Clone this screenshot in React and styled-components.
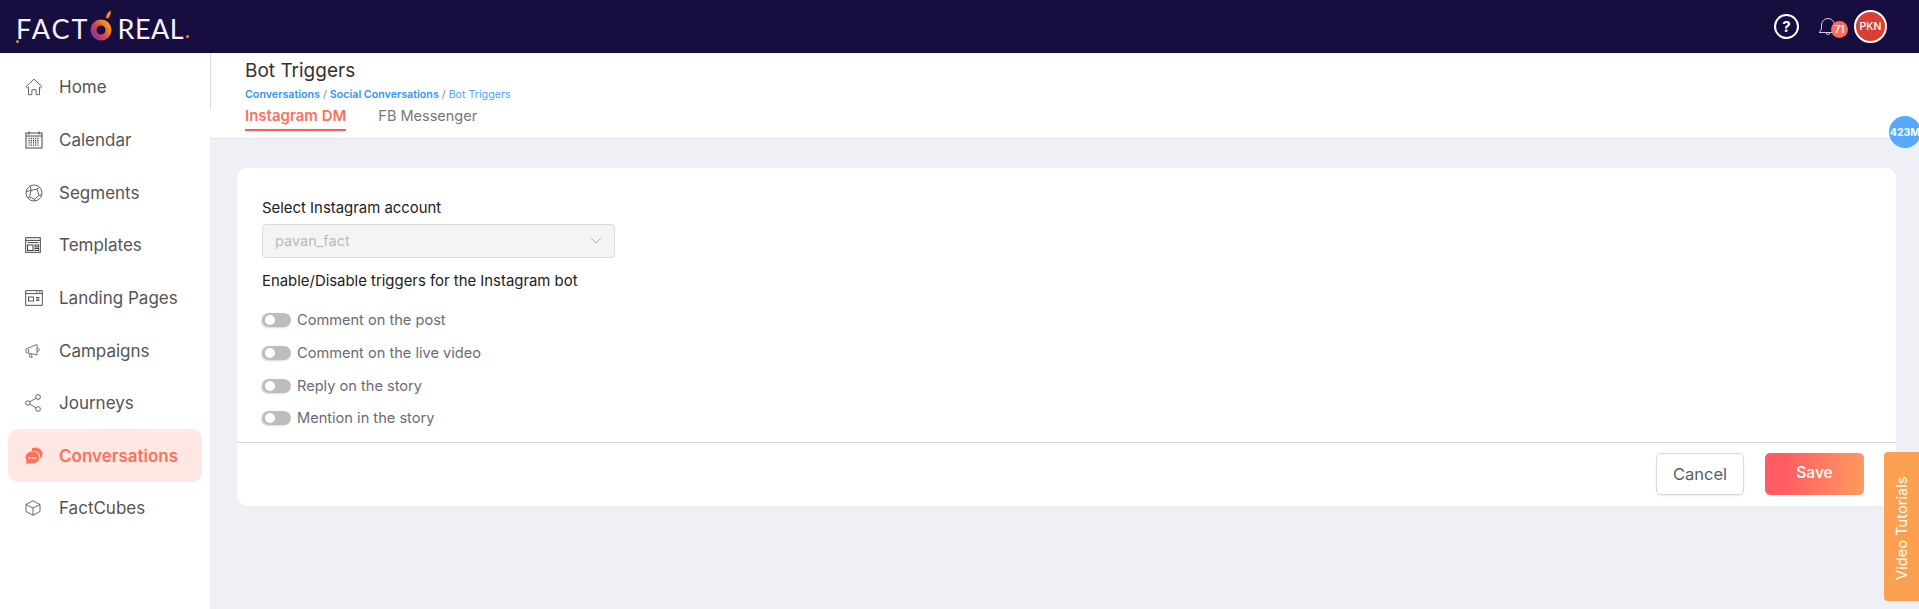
import React from "react";
import styled, { createGlobalStyle } from "styled-components";

const GlobalStyle = createGlobalStyle`
  html, body {
    margin: 0;
    padding: 0;
    height: 100%;
    overflow: hidden;
    background: #eff0f6;
    font-family: Inter, "Liberation Sans", sans-serif;
  }
  * { box-sizing: border-box; }
`;

const HomeIcon = () => (
  <svg width="18" height="18" viewBox="0 0 18 18" fill="none" stroke="#555" strokeWidth="0.9">
    <path d="M1 8.600 9 1.200l8 7.400-1.600 1.300-.9-.8v7.600h-3.400v-5H6.900v5H3.500V9.100l-.9.800z" strokeLinejoin="round" />
  </svg>
);
const CalendarIcon = () => (
  <svg width="18" height="18" viewBox="0 0 18 18" fill="none" stroke="#444" strokeWidth="1">
    <rect x="1" y="2" width="16" height="15" />
    <path d="M4 .5v3M14 .5v3M1 5h16" />
    <path d="M3.500 7.500h11M3.500 9.700h11M3.500 11.900h11M3.500 14.100h11" strokeDasharray="1.200 1" strokeWidth="1.400" />
  </svg>
);
const SegmentsIcon = () => (
  <svg width="18" height="18" viewBox="0 0 18 18" fill="none" stroke="#555" strokeWidth="0.9">
    <circle cx="9" cy="9" r="8" />
    <path d="M5.500 2 6 6.500l-4.800 1M6 6.500l6-1.500 2.500-1.500M12 5l2 6.500 2.800-1M14 11.500l-4.500 3.800.5 1.600M9.500 15.300 4.500 13l-1.500 1M4.500 13 6 6.500" />
  </svg>
);
const TemplatesIcon = () => (
  <svg width="16" height="16" viewBox="0 0 16 16" fill="none" stroke="#444" strokeWidth="1">
    <rect x="0.700" y="0.700" width="14.600" height="14.600" />
    <path d="M.7 3.400h14.600M2.500 5.600h11" />
    <rect x="2.500" y="8" width="5.500" height="5.500" />
    <rect x="10" y="8" width="3.500" height="2" />
    <rect x="10" y="11.500" width="3.500" height="2" />
  </svg>
);
const LandingIcon = () => (
  <svg width="18" height="16" viewBox="0 0 18 16" fill="none" stroke="#444" strokeWidth="0.9">
    <rect x="0.700" y="0.700" width="16.600" height="14.600" />
    <path d="M.7 3.600h16.600" />
    <path d="M11 2.100h1.500M14 2.100h1.500" />
    <rect x="3.500" y="7" width="5" height="4" />
    <path d="M11 7.500h3.500M11 9h3.500M11 10.500h3.500" />
  </svg>
);
const CampaignsIcon = () => (
  <svg width="16" height="16" viewBox="0 0 16 16" fill="none" stroke="#666" strokeWidth="0.9">
    <path d="M1 6 12 1.500v10.500L1 9.500z" strokeLinejoin="round" />
    <path d="M4 10.200l.8 4h2.400l-.8-3.200M12 5c1.500.2 2.500.8 2.500 1.700s-1 1.500-2.500 1.700" />
    <path d="M3.500 6v3" />
  </svg>
);
const JourneysIcon = () => (
  <svg width="16" height="18" viewBox="0 0 16 18" fill="none" stroke="#555" strokeWidth="0.9">
    <circle cx="2.800" cy="9" r="2.200" />
    <circle cx="13" cy="3" r="2.400" />
    <circle cx="13" cy="15" r="2.400" />
    <path d="M4.800 7.900 10.900 4.200M4.800 10.100l6.100 3.700" />
  </svg>
);
const ConversationsIcon = () => (
  <svg width="18" height="18" viewBox="0 0 18 18">
    <path d="M7 1.200c3.500-1.500 8-.2 9.800 3 1 2 .8 4-.2 5.800l.6 1.500-1.800-.5C15.500 6.500 11.500 3 7 4.300z" fill="#ff7059" />
    <path d="M7.500 4.500c3.800 0 6.700 2.600 6.700 6 0 3.500-3 6-6.700 6H.4l1.600-2C.9 13.300.5 12 .5 10.500c0-3.400 3.200-6 7-6z" fill="#ff7059" />
    <circle cx="4.500" cy="11" r="0.900" fill="#fff" />
    <circle cx="7.300" cy="11" r="0.900" fill="#fff" />
    <circle cx="10.100" cy="11" r="0.900" fill="#fff" />
  </svg>
);
const CubeIcon = () => (
  <svg width="16" height="16" viewBox="0 0 16 16" fill="none" stroke="#555" strokeWidth="0.9" strokeLinejoin="round">
    <path d="M8 .8 15 4.500v7L8 15.200 1 11.500v-7z" />
    <path d="M1 4.500 8 8l7-3.500M8 8v7.200" />
  </svg>
);

const navItems = [
  { name: "Home", icon: <HomeIcon /> },
  { name: "Calendar", icon: <CalendarIcon /> },
  { name: "Segments", icon: <SegmentsIcon /> },
  { name: "Templates", icon: <TemplatesIcon /> },
  { name: "Landing Pages", icon: <LandingIcon /> },
  { name: "Campaigns", icon: <CampaignsIcon /> },
  { name: "Journeys", icon: <JourneysIcon /> },
  { name: "Conversations", icon: <ConversationsIcon />, active: true },
  { name: "FactCubes", icon: <CubeIcon /> },
];

const triggers = [
  "Comment on the post",
  "Comment on the live video",
  "Reply on the story",
  "Mention in the story",
];

export default function App() {
  return (
    <Page>
      <GlobalStyle />
      <TopBar>
        <Logo>
          <LogoWord>FACT</LogoWord>
          <svg width="24" height="34" viewBox="0 0 24 34">
            <defs>
              <linearGradient id="ring" x1="0" y1="1" x2="1" y2="0.300">
                <stop offset="0" stopColor="#8a2f9e" />
                <stop offset="0.55" stopColor="#dd4a4a" />
                <stop offset="1" stopColor="#f59023" />
              </linearGradient>
            </defs>
            <circle cx="12" cy="20" r="7.500" fill="none" stroke="url(#ring)" strokeWidth="6" />
            <path d="M17 8c0-3 1.500-6 4.500-7.500.8 2.500 0 5.500-2.500 8z" fill="#f08a24" />
          </svg>
          <LogoWord $tight>REAL</LogoWord>
          <LogoDot />
          <FootDot />
          <TopDot />
        </Logo>
        <TopActions>
          <HelpButton>?</HelpButton>
          <Bell>
            <svg width="20" height="20" viewBox="0 0 20 20" fill="none" stroke="#cfcfdc" strokeWidth="1">
              <path d="M1 15.500c2-1 2.500-3 2.500-5.500V8a6.500 6.500 0 0 1 13 0v2c0 2.500.5 4.500 2.500 5.500z" strokeLinejoin="round" />
              <path d="M8 15.500a2 2 0 0 0 4 0" />
            </svg>
            <BellCount>71</BellCount>
          </Bell>
          <Avatar>PKN</Avatar>
        </TopActions>
      </TopBar>

      <Body>
        <Sidebar>
          {navItems.map(({ name, icon, active }) => (
            <NavItem key={name} $active={active}>
              <NavIcon>{icon}</NavIcon>
              {name}
            </NavItem>
          ))}
        </Sidebar>

        <Main>
          <SubHeader>
            <PageTitle>Bot Triggers</PageTitle>
            <Crumbs>
              <b>Conversations</b> <i>/</i> <b>Social Conversations</b> <i>/</i> Bot Triggers
            </Crumbs>
            <Tabs>
              <Tab $active>Instagram DM</Tab>
              <Tab>FB Messenger</Tab>
            </Tabs>
          </SubHeader>

          <Content>
            <Card>
              <CardBody>
                <FieldLabel>Select Instagram account</FieldLabel>
                <SelectBox>
                  pavan_fact
                  <svg width="12" height="7" viewBox="0 0 12 7" fill="none" stroke="#b5b5b5" strokeWidth="1">
                    <path d="M1 .8 6 6l5-5.200" />
                  </svg>
                </SelectBox>
                <TriggerHeading>Enable/Disable triggers for the Instagram bot</TriggerHeading>
                <TriggerList>
                  {triggers.map((t) => (
                    <TriggerRow key={t}>
                      <Toggle />
                      {t}
                    </TriggerRow>
                  ))}
                </TriggerList>
              </CardBody>
              <CardFooter>
                <CancelButton>Cancel</CancelButton>
                <SaveButton>Save</SaveButton>
              </CardFooter>
            </Card>
          </Content>
        </Main>
      </Body>

      <StorageBadge>423M</StorageBadge>
      <VideoTab>Video Tutorials</VideoTab>
    </Page>
  );
}

const Page = styled.div`
  position: relative;
  height: 609px;
  width: 100%;
  overflow: hidden;
  display: flex;
  flex-direction: column;
`;

const TopBar = styled.header`
  height: 53px;
  flex: none;
  background: #170d3e;
  display: flex;
  align-items: center;
  justify-content: space-between;
  padding: 0 32px 0 16px;
`;

const Logo = styled.div`
  position: relative;
  display: flex;
  align-items: center;
  color: #fff;
`;

const LogoWord = styled.span`
  font-family: Lato, Inter, sans-serif;
  font-size: 27px;
  line-height: 34px;
  font-weight: 400;
  letter-spacing: ${(p) => (p.$tight ? "0.500px" : "2px")};
  color: #f4f2f8;
  margin-top: 4px;
  margin-left: ${(p) => (p.$tight ? "4px" : "0")};
`;

const LogoDot = styled.i`
  width: 3px;
  height: 3px;
  margin: 20px 0 0 2px;
  background: #f08a24;
  border-radius: 50%;
`;

const FootDot = styled.i`
  position: absolute;
  left: 0;
  top: 32px;
  width: 3px;
  height: 3px;
  background: #f08a24;
  border-radius: 50%;
`;

const TopDot = styled.i`
  position: absolute;
  left: 121px;
  top: 9px;
  width: 2px;
  height: 2px;
  background: #b9489c;
  border-radius: 50%;
`;

const TopActions = styled.div`
  display: flex;
  align-items: center;
`;

const HelpButton = styled.div`
  width: 25px;
  height: 25px;
  border: 2px solid #fff;
  border-radius: 50%;
  color: #fff;
  font-size: 15px;
  font-weight: 700;
  display: flex;
  align-items: center;
  justify-content: center;
  margin-right: 19px;
`;

const Bell = styled.div`
  position: relative;
  width: 20px;
  height: 20px;
  margin-right: 16px;
`;

const BellCount = styled.span`
  position: absolute;
  top: 4px;
  left: 13px;
  width: 17px;
  height: 17px;
  border-radius: 50%;
  background: #ff6b55;
  color: #fff;
  font-size: 10px;
  font-weight: 600;
  display: flex;
  align-items: center;
  justify-content: center;
`;

const Avatar = styled.div`
  width: 33px;
  height: 33px;
  border-radius: 50%;
  border: 2px solid #fff;
  background: #d93f33;
  color: #fff;
  font-size: 10.500px;
  font-weight: 500;
  display: flex;
  align-items: center;
  justify-content: center;
`;

const Body = styled.div`
  flex: 1;
  display: flex;
  min-height: 0;
`;

const Sidebar = styled.nav`
  width: 210px;
  flex: none;
  background: #fff;
  padding: 8px 8px 0;
  display: flex;
  flex-direction: column;
`;

const NavItem = styled.div`
  height: 52.650px;
  flex: none;
  display: flex;
  align-items: center;
  padding-left: 17px;
  border-radius: 10px;
  font-size: 17px;
  font-weight: ${(p) => (p.$active ? 600 : 400)};
  color: ${(p) => (p.$active ? "#ff7059" : "#555")};
  background: ${(p) => (p.$active ? "#ffe8e3" : "transparent")};
`;

const NavIcon = styled.span`
  width: 34px;
  flex: none;
  display: flex;
  align-items: center;
  svg { display: block; }
`;

const Main = styled.main`
  flex: 1;
  min-width: 0;
  display: flex;
  flex-direction: column;
`;

const SubHeader = styled.div`
  position: relative;
  height: 86px;
  flex: none;
  background: #fff;
  border-bottom: 1px solid #e3e3e8;
  padding: 6px 0 0 35px;
  &::before {
    content: "";
    position: absolute;
    top: 0;
    left: 0;
    width: 1px;
    height: 57px;
    background: #dcdce2;
  }
`;

const PageTitle = styled.h1`
  margin: 0;
  font-size: 19px;
  line-height: 24px;
  font-weight: 400;
  color: #333;
`;

const Crumbs = styled.div`
  margin-top: 5px;
  font-size: 10.700px;
  line-height: 14px;
  color: #4da3ff;
  b { font-weight: 600; color: #2f93ff; }
  i { font-style: normal; color: #888; }
`;

const Tabs = styled.div`
  display: flex;
  gap: 32px;
  margin-top: 1px;
`;

const Tab = styled.div`
  font-size: ${(p) => (p.$active ? "15px" : "14.500px")};
  line-height: 20px;
  padding: 3px 0 3px;
  font-weight: ${(p) => (p.$active ? 600 : 400)};
  color: ${(p) => (p.$active ? "#ff6f61" : "#777")};
  border-bottom: 2px solid ${(p) => (p.$active ? "#ff5d5d" : "transparent")};
`;

const Content = styled.div`
  flex: 1;
  background: #eff0f6;
  padding: 29px 23px 0 27px;
`;

const Card = styled.section`
  height: 338px;
  background: #fff;
  border-radius: 10px;
  display: flex;
  flex-direction: column;
`;

const CardBody = styled.div`
  height: 275px;
  flex: none;
  padding: 30px 0 0 25px;
  border-bottom: 1px solid #d8d8d8;
`;

const FieldLabel = styled.div`
  font-size: 14.900px;
  line-height: 20px;
  color: #222;
`;

const SelectBox = styled.div`
  width: 353px;
  height: 34px;
  margin-top: 6px;
  padding: 0 12px 2px;
  background: #f4f4f4;
  border: 1px solid #dcdcdc;
  border-radius: 4px;
  color: #bbb;
  font-size: 14.500px;
  display: flex;
  align-items: center;
  justify-content: space-between;
`;

const TriggerHeading = styled.div`
  margin-top: 13px;
  font-size: 14.900px;
  line-height: 20px;
  color: #222;
`;

const TriggerList = styled.div`
  margin-top: 19px;
  display: flex;
  flex-direction: column;
  gap: 12.800px;
`;

const TriggerRow = styled.div`
  height: 20px;
  display: flex;
  align-items: center;
  gap: 6px;
  font-size: 14.600px;
  color: #6b6b76;
`;

const Toggle = styled.span`
  position: relative;
  width: 29px;
  height: 14px;
  border-radius: 7px;
  background: #bdbdbd;
  box-shadow: -1px 1px 2px rgba(0, 0, 0, 0.15);
  &::after {
    content: "";
    position: absolute;
    top: 2px;
    left: 3px;
    width: 10px;
    height: 10px;
    border-radius: 50%;
    background: #fff;
  }
`;

const CardFooter = styled.div`
  flex: 1;
  display: flex;
  align-items: flex-start;
  justify-content: flex-end;
  gap: 21px;
  padding: 10px 32px 0 0;
`;

const CancelButton = styled.button`
  width: 88px;
  height: 42px;
  background: #fff;
  border: 1px solid #d9d9d9;
  border-radius: 5px;
  box-shadow: 0 1px 2px rgba(0, 0, 0, 0.08);
  font-family: inherit;
  font-size: 16.500px;
  color: #555f6b;
`;

const SaveButton = styled.button`
  width: 99px;
  height: 42px;
  background: linear-gradient(90deg, #ff5d63 20%, #ff9a5f 100%);
  border: none;
  border-radius: 5px;
  font-family: inherit;
  font-size: 15.500px;
  font-weight: 500;
  color: #fff;
  padding: 0 0 3px 0;
`;

const StorageBadge = styled.div`
  position: absolute;
  top: 116px;
  left: 1889px;
  width: 32px;
  height: 32px;
  border-radius: 50%;
  background: #57a8ff;
  color: #fff;
  font-size: 10.500px;
  font-weight: 700;
  display: flex;
  align-items: center;
  justify-content: center;
`;

const VideoTab = styled.div`
  position: absolute;
  top: 452px;
  left: 1884px;
  width: 35px;
  height: 149px;
  background: #fb9f50;
  color: #fff;
  font-size: 14.700px;
  writing-mode: vertical-rl;
  transform: rotate(180deg);
  border-radius: 0 4px 4px 0;
  display: flex;
  align-items: center;
  justify-content: center;
  padding-bottom: 4px;
`;
